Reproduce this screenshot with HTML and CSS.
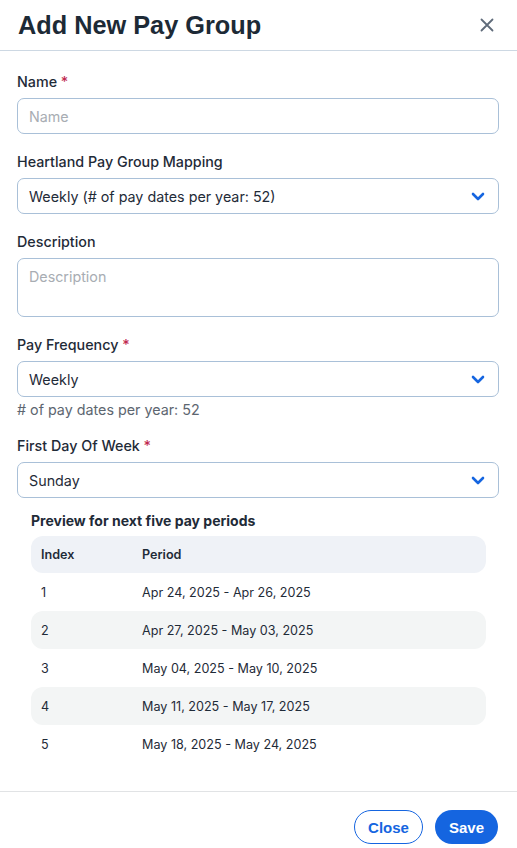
FILE: index.html
```html
<!DOCTYPE html>
<html lang="en">
<head>
  <meta charset="UTF-8">
  <meta name="viewport" content="width=device-width, initial-scale=1.0">
  <title>Add New Pay Group</title>
  <link rel="stylesheet" href="styles.css">
</head>
<body>
<div class="modal">
  <div class="modal-header">
    <h1>Add New Pay Group</h1>
    <button class="close-x" aria-label="Close">
      <svg width="14" height="14" viewBox="0 0 14 14"><path d="M1.5 1.5L12.5 12.5M12.5 1.5L1.5 12.5" stroke="#5f6b7a" stroke-width="1.8" stroke-linecap="round"/></svg>
    </button>
  </div>

  <div class="modal-body">
    <div class="field">
      <label>Name <span class="req">*</span></label>
      <input type="text" placeholder="Name">
    </div>

    <div class="field">
      <label>Heartland Pay Group Mapping</label>
      <div class="select">
        <span>Weekly (# of pay dates per year: 52)</span>
        <svg class="chev" width="14" height="9" viewBox="0 0 14 9"><path d="M2 2L7 7L12 2" fill="none" stroke="#1565e0" stroke-width="2.6" stroke-linecap="round" stroke-linejoin="round"/></svg>
      </div>
    </div>

    <div class="field">
      <label>Description</label>
      <textarea placeholder="Description"></textarea>
    </div>

    <div class="field">
      <label>Pay Frequency <span class="req">*</span></label>
      <div class="select">
        <span>Weekly</span>
        <svg class="chev" width="14" height="9" viewBox="0 0 14 9"><path d="M2 2L7 7L12 2" fill="none" stroke="#1565e0" stroke-width="2.6" stroke-linecap="round" stroke-linejoin="round"/></svg>
      </div>
      <div class="hint"># of pay dates per year: 52</div>
    </div>

    <div class="field">
      <label>First Day Of Week <span class="req">*</span></label>
      <div class="select">
        <span>Sunday</span>
        <svg class="chev" width="14" height="9" viewBox="0 0 14 9"><path d="M2 2L7 7L12 2" fill="none" stroke="#1565e0" stroke-width="2.6" stroke-linecap="round" stroke-linejoin="round"/></svg>
      </div>
    </div>

    <div class="preview">
      <h3>Preview for next five pay periods</h3>
      <div class="table">
        <div class="row head"><span class="idx">Index</span><span>Period</span></div>
        <div class="row"><span class="idx">1</span><span>Apr 24, 2025 - Apr 26, 2025</span></div>
        <div class="row alt"><span class="idx">2</span><span>Apr 27, 2025 - May 03, 2025</span></div>
        <div class="row"><span class="idx">3</span><span>May 04, 2025 - May 10, 2025</span></div>
        <div class="row alt"><span class="idx">4</span><span>May 11, 2025 - May 17, 2025</span></div>
        <div class="row"><span class="idx">5</span><span>May 18, 2025 - May 24, 2025</span></div>
      </div>
    </div>
  </div>

  <div class="modal-footer">
    <button class="btn btn-outline">Close</button>
    <button class="btn btn-primary">Save</button>
  </div>
</div>
</body>
</html>
```

FILE: styles.css
```css
body {
    margin: 0;
    font-family: Inter, "Noto Sans", sans-serif;
    color: #1f2b38;
    background: #fff;
}
.modal {
    width: 517px;
}
.modal-header {
    display: flex;
    align-items: center;
    justify-content: space-between;
    height: 51px;
    padding: 0 18px;
    border-bottom: 1px solid #cdd8e3;
    box-sizing: border-box;
}
.modal-header h1 {
    margin: 0;
    font-family: "Liberation Sans", Arial, sans-serif;
    font-size: 25.3px;
    font-weight: bold;
    color: #1d2a36;
}
.close-x {
    background: none;
    border: none;
    padding: 0;
    margin-right: 5px;
    display: flex;
}
.modal-body {
    padding: 22px 18px 0 17px;
}
.field {
    margin-bottom: 19px;
}
.field label {
    display: block;
    font-size: 14.3px;
    font-weight: 500;
    margin-bottom: 8px;
    line-height: 17px;
}
.req {
    color: #c0284f;
}
input, textarea, .select {
    display: block;
    width: 100%;
    box-sizing: border-box;
    border: 1px solid #a9c0d8;
    border-radius: 7px;
    font-family: inherit;
    font-size: 14.3px;
    color: #1f2b38;
    padding: 0 11px;
    background: #fff;
}
input {
    height: 36px;
}
textarea {
    height: 59px;
    padding-top: 9px;
    resize: none;
}
::placeholder {
    color: #a8adb3;
}
.select {
    display: flex;
    align-items: center;
    justify-content: space-between;
    height: 36px;
    padding-right: 13px;
}
.hint {
    margin-top: 4px;
    font-size: 14.3px;
    color: #5d6670;
}
.preview {
    padding: 0 13px 0 14px;
    margin-top: -5px;
}
.preview h3 {
    margin: 0 0 7px;
    font-size: 14px;
    font-weight: 700;
    line-height: 17px;
}
.table {
    font-size: 12.6px;
}
.row {
    display: flex;
    align-items: center;
    height: 38px;
    padding: 0 10px;
    border-radius: 12px;
}
.row.head {
    background: #eff2f7;
    font-weight: 600;
    height: 37px;
}
.row.alt {
    background: #f3f5f5;
}
.idx {
    width: 101px;
}
.modal-footer {
    margin-top: 28px;
    border-top: 1px solid #e1e3e5;
    display: flex;
    justify-content: flex-end;
    gap: 12px;
    padding: 18px 19px 0;
}
.btn {
    height: 34px;
    border-radius: 17px;
    font-family: "Liberation Sans", Arial, sans-serif;
    font-size: 15px;
    font-weight: bold;
}
.btn-outline {
    background: #fff;
    color: #1565e0;
    border: 1px solid #1565e0;
    padding: 0 13px;
}
.btn-primary {
    background: #1565e0;
    color: #fff;
    border: none;
    padding: 0 14px;
}
```
